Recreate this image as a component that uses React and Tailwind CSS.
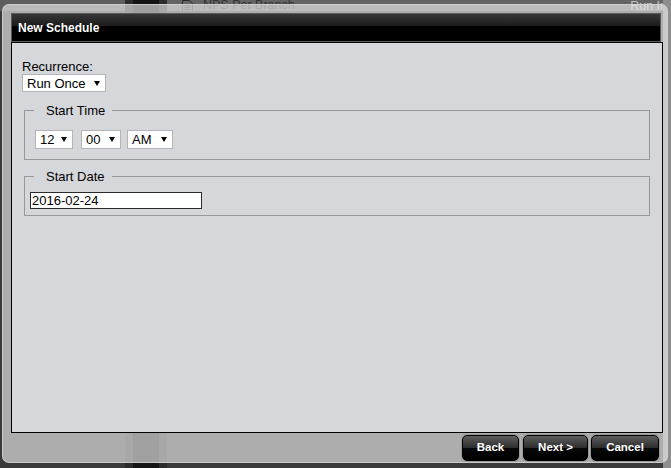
import React from "react";

// small black down-arrow used by the fake select boxes
const Caret = () => (
  <svg width="6" height="5" viewBox="0 0 6 5" className="shrink-0">
    <path d="M0 0h6L3 5z" fill="#000" />
  </svg>
);

const Picker = ({ value, className }) => (
  <div
    className={`flex items-center justify-between bg-white border border-[#b4b4b4] pl-[4px] pr-[5px] text-[13px] leading-none text-black ${className}`}
  >
    <span>{value}</span>
    <Caret />
  </div>
);

const DocIcon = () => (
  <svg width="11" height="12" viewBox="0 0 11 12" className="shrink-0">
    <path d="M0.5 0.5h7l3 3v8h-10z" fill="none" stroke="#2a2a2a" />
    <path d="M2.5 5.5h6M2.5 7.5h6M2.5 9.5h6" stroke="#2a2a2a" />
  </svg>
);

const Button = ({ children, className }) => (
  <button
    className={`h-[26px] rounded-[5px] border border-black shadow-[0_0_0_1px_rgba(140,140,140,0.6)] bg-[linear-gradient(to_bottom,#5e5e5e_0%,#2c2c2c_50%,#080808_50%,#000_100%)] text-white text-[11.5px] font-bold leading-none ${className}`}
  >
    {children}
  </button>
);

export default function App() {
  return (
    <div className="relative w-[671px] h-[468px] overflow-hidden bg-[#3a3a3a] font-['Liberation_Sans',Arial,sans-serif]">
      {/* page behind the dialog */}
      <div className="flex h-full">
        <div className="w-[125px] flex flex-col">
          <div className="h-[11px] bg-[#5e5e5e]" />
          <div className="flex-1 bg-[#3a3a3a]" />
        </div>
        <div className="w-[8px] bg-[#2c2c2c]" />
        <div className="w-[26px] bg-[#141414]" />
        <div className="w-[8px] bg-[#2c2c2c]" />
        <div className="flex-1 flex flex-col">
          <div className="h-[11px] bg-[#646464] flex items-start pl-[15px]">
            <div className="flex items-start gap-[10px]">
              <DocIcon />
              <span className="text-[12.5px] leading-[11px] text-[#333]">NPS Per Branch</span>
            </div>
            <span className="ml-auto -mr-[4px] text-[12.5px] leading-[12px] text-[#c4c4c4] whitespace-nowrap">Run In</span>
          </div>
          <div className="flex-1 bg-[#3a3a3a]" />
        </div>
        <div className="w-[8px] bg-[#8e8e8e]" />
      </div>

      {/* dialog */}
      <div className="absolute left-[2px] top-[4px] w-[666px] h-[459px] rounded-[7px] border border-[#d2d2d2]/80 bg-[rgba(235,235,235,0.65)] pt-[8px] pl-[8px] pr-[8px] pb-[1px] flex flex-col">
        <div className="w-[650px] h-[29px] shrink-0 border border-[#5a5a5a] bg-[linear-gradient(to_bottom,#363636_0%,#1b1b1b_46%,#000_46%,#000_100%)] flex items-center pl-[6px]">
          <span className="text-white text-[12px] font-bold leading-none">New Schedule</span>
        </div>

        <div className="w-[652px] h-[391px] shrink-0 border border-black bg-[#d6d7db] px-[10px] pt-[16px] text-black">
          <div className="text-[13px] leading-[15px]">Recurrence:</div>
          <Picker value="Run Once" className="w-[84px] h-[18px]" />

          <fieldset className="mx-[2px] mt-[11px] border border-[#989898]">
            <legend className="ml-[9px] pl-[12px] pr-[7px] text-[13px] leading-[15px]">Start Time</legend>
            <div className="flex pl-[10px] pt-[12px] pb-[10px]">
              <Picker value="12" className="w-[38px] h-[19px] mr-[8px]" />
              <Picker value="00" className="w-[40px] h-[19px] mr-[6px]" />
              <Picker value="AM" className="w-[46px] h-[19px]" />
            </div>
          </fieldset>

          <fieldset className="mx-[2px] mt-[9px] border border-[#989898]">
            <legend className="ml-[9px] pl-[12px] pr-[7px] text-[13px] leading-[15px]">Start Date</legend>
            <div className="pl-[5px] pt-[8px] pb-[6px]">
              <input
                type="text"
                readOnly
                value="2016-02-24"
                className="block w-[172px] h-[17px] border border-[#2a2a2a] bg-white px-[1px] text-[13px] leading-none text-black outline-none"
              />
            </div>
          </fieldset>
        </div>

        <div className="flex justify-end mt-[2px]">
          <Button className="w-[57px] mr-[4px]">Back</Button>
          <Button className="w-[65px] mr-[3px]">Next &gt;</Button>
          <Button className="w-[68px]">Cancel</Button>
        </div>
      </div>
    </div>
  );
}
